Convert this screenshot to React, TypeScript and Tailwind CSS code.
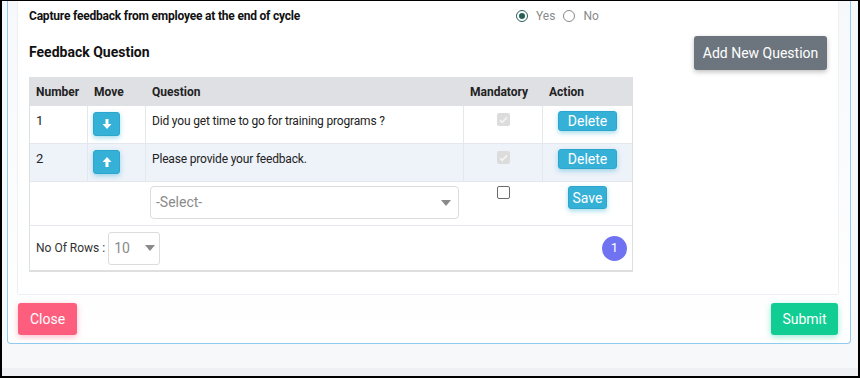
type Question = { id: number; text: string; mandatory: boolean };

const questions: Question[] = [
  { id: 1, text: "Did you get time to go for training programs ?", mandatory: true },
  { id: 2, text: "Please provide your feedback.", mandatory: true },
];

function Caret() {
  return (
    <svg width="10" height="6" viewBox="0 0 10 6" aria-hidden>
      <path d="M0 0h10L5 6z" fill="#8a8a8a" />
    </svg>
  );
}

// chunky arrow like the old font-awesome one
function Arrow({ up }: { up?: boolean }) {
  return (
    <svg
      width="10"
      height="10"
      viewBox="0 0 10 10"
      aria-hidden
      className={up ? "rotate-180" : undefined}
    >
      <path d="M3.5 0h3v5h3L5 10 0.5 5h3z" fill="#fff" />
    </svg>
  );
}

function DisabledCheck() {
  return (
    <span className="flex h-[13px] w-[13px] items-center justify-center rounded-[2px] bg-[#dcdcdc]">
      <svg width="9" height="8" viewBox="0 0 9 8" aria-hidden>
        <path d="M1 4.2l2.2 2.2L8 1.4" fill="none" stroke="#f4f4f4" strokeWidth="1.6" />
      </svg>
    </span>
  );
}

function Radio({ checked, label }: { checked: boolean; label: string }) {
  return (
    <label className="flex items-center gap-[8px] text-[12px] text-[#8a8a8a]">
      <span
        className={[
          "flex h-[12px] w-[12px] items-center justify-center rounded-full border",
          checked ? "border-[#285e58]" : "border-[#8a8a8a]",
        ].join(" ")}
      >
        {checked ? <span className="h-[6px] w-[6px] rounded-full bg-[#285e58]" /> : null}
      </span>
      {label}
    </label>
  );
}

const infoBtn =
  "rounded-[3px] border border-[#2ea6cc] bg-[#35b0d7] text-white shadow-[0_2px_5px_rgba(53,176,215,0.45)]";

export default function App() {
  return (
    <div
      className="flex h-[378px] w-[860px] flex-col overflow-hidden border-x-2 border-t border-b-2 border-black bg-[#f7f8fa] text-[#212529]"
      style={{ fontFamily: "Roboto, 'Liberation Sans', sans-serif" }}
    >
      {/* modal body */}
      <div className="ml-[5px] mr-[7px] flex flex-col rounded-b-[4px] border-x-[1.5px] border-b-[1.5px] border-[#8ecbee] bg-gradient-to-b from-[#f7f8fa] to-white pl-[10px] pr-[12px]">
        <div className="-ml-[1px] -mr-[1px] rounded-b-[3px] border-x border-b border-[#edf0f4] bg-white pb-[22px] pl-[11px] pr-[11px] pt-[6px]">
          <div className="flex h-[18px] items-center">
            <p className="w-[487px] text-[12px] font-bold tracking-[-0.2px] text-[#111]">
              Capture feedback from employee at the end of cycle
            </p>
            <div className="flex items-center gap-[8px]">
              <Radio checked label="Yes" />
              <Radio checked={false} label="No" />
            </div>
          </div>

          <div className="mt-[11px] flex items-center justify-between">
            <h2 className="-mt-[2px] text-[14px] font-bold text-[#111]">Feedback Question</h2>
            <button
              type="button"
              className="h-[34px] w-[133px] rounded-[3px] bg-[#6c757d] text-[14px] text-white shadow-[0_2px_5px_rgba(0,0,0,0.25)]"
            >
              Add New Question
            </button>
          </div>

          {/* questions table */}
          <div className="mt-[7px] w-[604px] border-x border-b-2 border-[#dedfe1] text-[12px]">
            <div className="flex h-[29px] items-center bg-[#dfe0e4] font-bold text-[#222]">
              <div className="w-[58px] pl-[6px]">Number</div>
              <div className="w-[58px] pl-[6px]">Move</div>
              <div className="w-[318px] pl-[6px]">Question</div>
              <div className="w-[79px] pl-[6px]">Mandatory</div>
              <div className="flex-1 pl-[6px]">Action</div>
            </div>

            {questions.map((q, i) => (
              <div
                key={q.id}
                className={[
                  "flex h-[38px] border-b border-[#e4e7eb]",
                  i % 2 === 1 ? "bg-[#eef2f9]" : "bg-white",
                ].join(" ")}
              >
                <div className="w-[58px] border-r border-[#e4e7eb] pl-[6px] pt-[5px] text-[13px]">{q.id}</div>
                <div className="w-[58px] border-r border-[#e4e7eb] pl-[5px] pt-[6px]">
                  <button
                    type="button"
                    className={`flex h-[24px] w-[27px] items-center justify-center ${infoBtn}`}
                  >
                    <Arrow up={i === 1} />
                  </button>
                </div>
                <div className="w-[318px] border-r border-[#e4e7eb] pl-[6px] pt-[6px] text-[12px] tracking-[-0.17px] text-[#222]">
                  {q.text}
                </div>
                <div className="flex w-[79px] justify-center border-r border-[#e4e7eb] pt-[7px]">
                  <DisabledCheck />
                </div>
                <div className="flex flex-1 justify-center pt-[5px]">
                  <button type="button" className={`h-[20px] w-[59px] text-[14px] leading-none ${infoBtn}`}>
                    Delete
                  </button>
                </div>
              </div>
            ))}

            <div className="flex h-[44px] border-b border-[#e4e7eb] bg-white pt-[4px]">
              <div className="w-[116px]" />
              <div className="w-[318px] pl-[4px]">
                <div className="flex h-[33px] w-[309px] items-center justify-between rounded-[4px] border border-[#dcdcdc] pl-[5px] pr-[7px] text-[14px] text-[#8a8a8a]">
                  -Select-
                  <Caret />
                </div>
              </div>
              <div className="flex w-[79px] justify-center">
                <span className="h-[13px] w-[13px] rounded-[2px] border border-[#6b6b6b] bg-white" />
              </div>
              <div className="flex flex-1 justify-center">
                <button type="button" className={`h-[23px] w-[39px] text-[14px] leading-none ${infoBtn}`}>
                  Save
                </button>
              </div>
            </div>

            <div className="flex h-[44px] items-center justify-between bg-white pl-[6px] pr-[5px]">
              <div className="flex items-center gap-[3px] text-[12px] text-[#333]">
                No Of Rows :
                <div className="flex h-[33px] w-[52px] items-center justify-between rounded-[3px] border border-[#dcdcdc] pl-[5px] pr-[4px] text-[14px] text-[#8a8a8a]">
                  10
                  <Caret />
                </div>
              </div>
              <span className="flex h-[25px] w-[25px] items-center justify-center rounded-full bg-[#6f72f1] text-[13px] text-white">
                1
              </span>
            </div>
          </div>
        </div>

        {/* modal footer */}
        <div className="flex items-center justify-between pb-[8px] pt-[8px]">
          <button
            type="button"
            className="h-[32px] w-[59px] rounded-[3px] bg-[#fd5e7e] text-[14px] text-white shadow-[0_2px_6px_rgba(253,94,126,0.4)]"
          >
            Close
          </button>
          <button
            type="button"
            className="h-[32px] w-[67px] rounded-[3px] bg-[#12cd93] text-[14px] text-white shadow-[0_2px_6px_rgba(18,205,147,0.4)]"
          >
            Submit
          </button>
        </div>
      </div>

      <div className="flex-1" />
      <div className="h-[8px] bg-[#eff0f4]" />
    </div>
  );
}
